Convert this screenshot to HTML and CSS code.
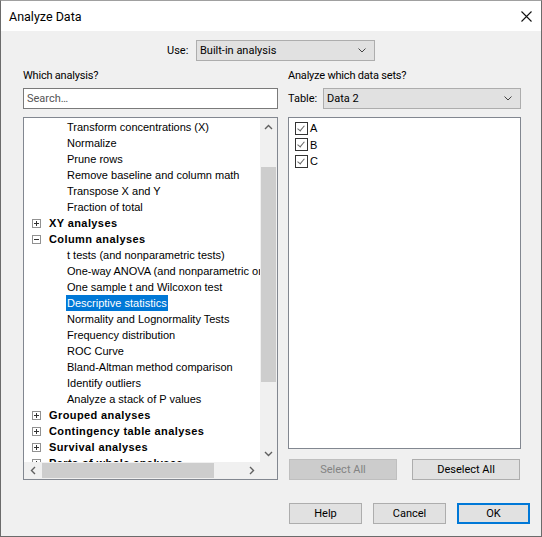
FILE: index.html
```html
<!DOCTYPE html>
<html lang="en">
<head>
  <meta charset="UTF-8" />
  <title>Analyze Data</title>
  <link rel="stylesheet" href="styles.css">
</head>
<body>

  <div class="window">

    <!-- Title bar -->
    <div class="titlebar">
      <span class="title">Analyze Data</span>
      <svg class="close" width="11" height="11" viewBox="0 0 11 11">
        <path d="M0.5 0.5L10.5 10.5M10.5 0.5L0.5 10.5" stroke="#111" stroke-width="1.1" fill="none"/>
      </svg>
    </div>

    <div class="dialog">

      <div class="use-row">
        <span class="use-label">Use:</span>
        <div class="select use-select">
          <span>Built-in analysis</span>
          <svg class="chevron" width="8" height="5" viewBox="0 0 8 5"><path d="M0.5 0.5L4 4L7.5 0.5" stroke="#444" fill="none"/></svg>
        </div>
      </div>

      <div class="columns">

        <!-- Left: analysis tree -->
        <div class="col">
          <div class="col-label">Which analysis?</div>
          <div class="search">Search…</div>

          <div class="tree-box">
            <div class="tree">
              <div class="leaf"><span>Transform concentrations (X)</span></div>
              <div class="leaf"><span>Normalize</span></div>
              <div class="leaf"><span>Prune rows</span></div>
              <div class="leaf"><span>Remove baseline and column math</span></div>
              <div class="leaf"><span>Transpose X and Y</span></div>
              <div class="leaf"><span>Fraction of total</span></div>
              <div class="node"><i class="expander plus"></i>XY analyses</div>
              <div class="node"><i class="expander"></i>Column analyses</div>
              <div class="leaf"><span>t tests (and nonparametric tests)</span></div>
              <div class="leaf"><span>One-way ANOVA (and nonparametric or mixed)</span></div>
              <div class="leaf"><span>One sample t and Wilcoxon test</span></div>
              <div class="leaf selected"><span>Descriptive statistics</span></div>
              <div class="leaf"><span>Normality and Lognormality Tests</span></div>
              <div class="leaf"><span>Frequency distribution</span></div>
              <div class="leaf"><span>ROC Curve</span></div>
              <div class="leaf"><span>Bland-Altman method comparison</span></div>
              <div class="leaf"><span>Identify outliers</span></div>
              <div class="leaf"><span>Analyze a stack of P values</span></div>
              <div class="node"><i class="expander plus"></i>Grouped analyses</div>
              <div class="node"><i class="expander plus"></i>Contingency table analyses</div>
              <div class="node"><i class="expander plus"></i>Survival analyses</div>
              <div class="node"><i class="expander plus"></i>Parts of whole analyses</div>
            </div>

            <div class="vscroll">
              <div class="arrow">
                <svg width="9" height="6" viewBox="0 0 9 6"><path d="M1 5L4.5 1.5L8 5" stroke="#606060" stroke-width="1.4" fill="none"/></svg>
              </div>
              <div class="vthumb"></div>
              <div class="arrow arrow-end">
                <svg width="9" height="6" viewBox="0 0 9 6"><path d="M1 1L4.5 4.5L8 1" stroke="#606060" stroke-width="1.4" fill="none"/></svg>
              </div>
            </div>

            <div class="hscroll">
              <div class="arrow">
                <svg width="6" height="9" viewBox="0 0 6 9"><path d="M5 1L1.5 4.5L5 8" stroke="#606060" stroke-width="1.4" fill="none"/></svg>
              </div>
              <div class="hthumb"></div>
              <div class="arrow arrow-end">
                <svg width="6" height="9" viewBox="0 0 6 9"><path d="M1 1L4.5 4.5L1 8" stroke="#606060" stroke-width="1.4" fill="none"/></svg>
              </div>
            </div>

            <div class="corner"></div>
          </div>
        </div>

        <!-- Right: data sets -->
        <div class="col">
          <div class="col-label">Analyze which data sets?</div>
          <div class="table-row">
            <span class="table-label">Table:</span>
            <div class="select table-select">
              <span>Data 2</span>
              <svg class="chevron" width="8" height="5" viewBox="0 0 8 5"><path d="M0.5 0.5L4 4L7.5 0.5" stroke="#444" fill="none"/></svg>
            </div>
          </div>

          <div class="data-list">
            <div class="data-row"><i class="checkbox"></i>A</div>
            <div class="data-row"><i class="checkbox"></i>B</div>
            <div class="data-row"><i class="checkbox"></i>C</div>
          </div>

          <div class="list-buttons">
            <button class="btn" disabled>Select All</button>
            <button class="btn">Deselect All</button>
          </div>
        </div>

      </div>

      <div class="footer">
        <button class="btn small">Help</button>
        <button class="btn small">Cancel</button>
        <button class="btn small default">OK</button>
      </div>

    </div>
  </div>

</body>
</html>
```

FILE: styles.css
```css
body {
  margin: 0;
  font-family: Roboto, "Liberation Sans", sans-serif;
  font-size: 11px;
  color: #000;
  background-color: #fff;
}

/* Window frame */
.window {
  width: 542px;
  height: 537px;
  box-sizing: border-box;
  border: 1px solid #6b6b6b;
  border-top-color: #a0a0a0;
  display: flex;
  flex-direction: column;
}

.titlebar {
  height: 30px;
  background-color: #fff;
  display: flex;
  align-items: center;
  justify-content: space-between;
  padding: 0 9px 0 8px;
}

.title {
  font-size: 12.5px;
}

.close {
  display: block;
}

.dialog {
  flex: 1;
  background-color: #f0f0f0;
}

/* Use: row */
.use-row {
  display: flex;
  align-items: center;
  margin-top: 9px;
  padding-left: 166px;
}

.use-label {
  width: 29px;
}

.select {
  height: 21px;
  box-sizing: border-box;
  border: 1px solid #adadad;
  background-color: #e1e1e1;
  display: flex;
  align-items: center;
  justify-content: space-between;
  padding: 0 8px 0 3px;
}

.chevron {
  display: block;
}

.use-select {
  width: 179px;
}

/* Two columns */
.columns {
  display: grid;
  grid-template-columns: 255px 233px;
  column-gap: 10px;
  padding-left: 22px;
  margin-top: 7px;
}

.col-label {
  line-height: 16px;
  letter-spacing: -0.2px;
}

.search {
  margin-top: 4px;
  height: 21px;
  box-sizing: border-box;
  border: 1px solid #7a7a7a;
  background-color: #fff;
  color: #555;
  padding-left: 3px;
  line-height: 19px;
}

.tree-box {
  margin-top: 8px;
  height: 363px;
  box-sizing: border-box;
  border: 1px solid #828790;
  background-color: #fff;
  display: grid;
  grid-template-columns: 1fr 17px;
  grid-template-rows: 1fr 17px;
  overflow: hidden;
}

.tree {
  overflow: hidden;
  padding-top: 1px;
  font-family: "Liberation Sans", Arial, sans-serif;
  white-space: nowrap;
}

.leaf,
.node {
  height: 16px;
  line-height: 16px;
}

.leaf span {
  margin-left: 42px;
  padding: 0 1px;
  display: inline-block;
}

.leaf.selected span {
  background-color: #0078d7;
  color: #fff;
}

.node {
  font-weight: bold;
  letter-spacing: 0.4px;
  display: flex;
  align-items: center;
}

.expander {
  width: 9px;
  height: 9px;
  box-sizing: border-box;
  border: 1px solid #919191;
  margin: 0 8px 0 8px;
  position: relative;
}

.expander::before {
  content: "";
  position: absolute;
  left: 1px;
  top: 3px;
  width: 5px;
  height: 1px;
  background-color: #333;
}

.expander.plus::after {
  content: "";
  position: absolute;
  left: 3px;
  top: 1px;
  width: 1px;
  height: 5px;
  background-color: #333;
}

/* Fake scrollbars */
.vscroll {
  background-color: #f0f0f0;
  display: flex;
  flex-direction: column;
  align-items: center;
}

.vscroll .arrow {
  height: 17px;
  width: 17px;
  display: flex;
  align-items: center;
  justify-content: center;
}

.vscroll .arrow-end {
  margin-top: auto;
}

.vthumb {
  width: 15px;
  height: 215px;
  margin-top: 32px;
  background-color: #cdcdcd;
}

.hscroll {
  background-color: #f0f0f0;
  display: flex;
  align-items: center;
}

.hscroll .arrow {
  width: 17px;
  height: 17px;
  display: flex;
  align-items: center;
  justify-content: center;
}

.hscroll .arrow-end {
  margin-left: auto;
}

.hthumb {
  width: 172px;
  height: 15px;
  margin-left: 1px;
  background-color: #cdcdcd;
}

.corner {
  background-color: #f0f0f0;
}

/* Right column */
.table-row {
  margin-top: 4px;
  display: flex;
  align-items: center;
}

.table-label {
  width: 35px;
}

.table-select {
  width: 198px;
}

.data-list {
  margin-top: 8px;
  height: 332px;
  box-sizing: border-box;
  border: 1px solid #828790;
  background-color: #fff;
  padding-top: 2px;
  font-family: "Liberation Sans", Arial, sans-serif;
}

.data-row {
  height: 16.5px;
  display: flex;
  align-items: center;
}

.checkbox {
  width: 13px;
  height: 13px;
  box-sizing: border-box;
  border: 1px solid #333;
  margin: 0 2px 0 6px;
  position: relative;
}

.checkbox::after {
  content: "";
  position: absolute;
  left: 3px;
  top: 1px;
  width: 3px;
  height: 6px;
  border: solid #666;
  border-width: 0 1px 1px 0;
  transform: rotate(40deg);
}

.list-buttons {
  margin-top: 10px;
  display: flex;
  justify-content: space-between;
  padding: 0 1px;
}

.btn {
  height: 21px;
  width: 108px;
  box-sizing: border-box;
  border: 1px solid #adadad;
  background-color: #e1e1e1;
  font-family: Roboto, "Liberation Sans", sans-serif;
  font-size: 11px;
  color: #000;
  padding: 0;
}

.btn:disabled {
  background-color: #cccccc;
  border-color: #bfbfbf;
  color: #838383;
}

/* Footer buttons */
.footer {
  margin-top: 23px;
  display: flex;
  justify-content: flex-end;
  gap: 11px;
  padding-right: 11px;
}

.btn.small {
  width: 73px;
}

.btn.default {
  border: 2px solid #0078d7;
}
```
